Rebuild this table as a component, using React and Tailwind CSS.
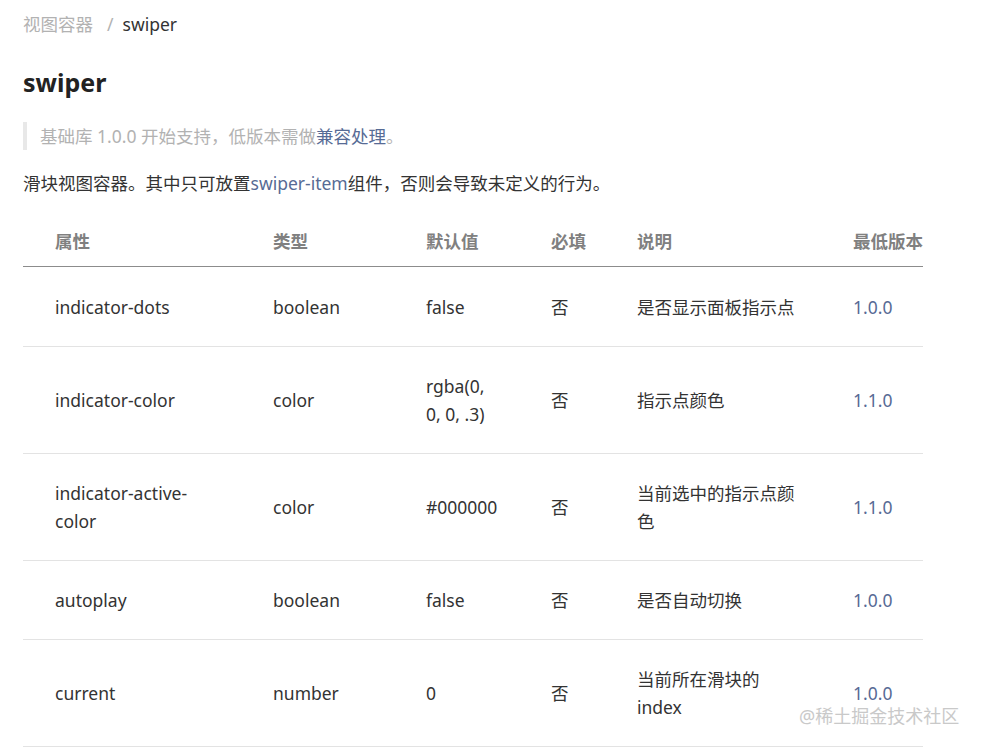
import React from 'react';

const cols = ['w-[218px]', 'w-[153px]', 'w-[125px]', 'w-[86px]', 'w-[216px]', 'w-[102px]'];

const rows = [
  { name: ['indicator-dots'], type: 'boolean', def: ['false'], req: '否', desc: ['是否显示面板指示点'], ver: '1.0.0' },
  { name: ['indicator-color'], type: 'color', def: ['rgba(0,', '0, 0, .3)'], req: '否', desc: ['指示点颜色'], ver: '1.1.0' },
  { name: ['indicator-active-', 'color'], type: 'color', def: ['#000000'], req: '否', desc: ['当前选中的指示点颜', '色'], ver: '1.1.0' },
  { name: ['autoplay'], type: 'boolean', def: ['false'], req: '否', desc: ['是否自动切换'], ver: '1.0.0' },
  { name: ['current'], type: 'number', def: ['0'], req: '否', desc: ['当前所在滑块的', 'index'], ver: '1.0.0' },
];

function Lines({ items }) {
  return items.map((t, i) => <div key={i}>{t}</div>);
}

export default function App() {
  return (
    <div
      className="relative w-[981px] h-[748px] overflow-hidden bg-white pl-[23px] text-[17.5px] leading-[28px] text-[#333]"
      style={{ fontFamily: '"Noto Sans", "Noto Sans CJK SC", sans-serif' }}
    >
      {/* breadcrumb */}
      <div className="mt-[10px] flex items-center">
        <span className="text-[#b2b2b2]">视图容器</span>
        <span className="ml-[14px] mr-[9px] text-[#b2b2b2]">/</span>
        <span className="text-[#333]">swiper</span>
      </div>

      <h1 className="mt-[26px] text-[25px] leading-[36px] font-bold text-[#222]">swiper</h1>

      <div className="mt-[22px] border-l-4 border-[#e8e8e8] pl-[13px] text-[#b2b2b2]">
        基础库 1.0.0 开始支持，低版本需做<span className="text-[#576b95]">兼容处理</span>。
      </div>

      <p className="mt-[19px]">
        滑块视图容器。其中只可放置<span className="text-[#576b95]">swiper-item</span>组件，否则会导致未定义的行为。
      </p>

      <div className="mt-[19px] w-[900px]">
        <div className="flex border-b border-[#8c8c8c] py-[11px] font-bold text-[#808080]">
          {['属性', '类型', '默认值', '必填', '说明', '最低版本'].map((h, i) => (
            <div key={h} className={`${cols[i]} pl-[32px] shrink-0`}>{h}</div>
          ))}
        </div>
        {rows.map((r, idx) => (
          <div
            key={idx}
            className={`flex items-center border-b border-[#e3e3e3] pb-[25px] ${idx === 0 ? 'pt-[26px]' : 'pt-[25px]'}`}
          >
            <div className={`${cols[0]} pl-[32px] shrink-0`}><Lines items={r.name} /></div>
            <div className={`${cols[1]} pl-[32px] shrink-0`}>{r.type}</div>
            <div className={`${cols[2]} pl-[32px] shrink-0`}><Lines items={r.def} /></div>
            <div className={`${cols[3]} pl-[32px] shrink-0`}>{r.req}</div>
            <div className={`${cols[4]} pl-[32px] shrink-0`}><Lines items={r.desc} /></div>
            <div className={`${cols[5]} pl-[32px] shrink-0 text-[#586a95]`}>{r.ver}</div>
          </div>
        ))}
      </div>

      <div
        className="absolute left-[799px] top-[703px] text-[18px] leading-[26px] text-[#c9c9c9]"
        style={{ textShadow: '0 0 1px #fff' }}
      >
        @稀土掘金技术社区
      </div>
    </div>
  );
}
